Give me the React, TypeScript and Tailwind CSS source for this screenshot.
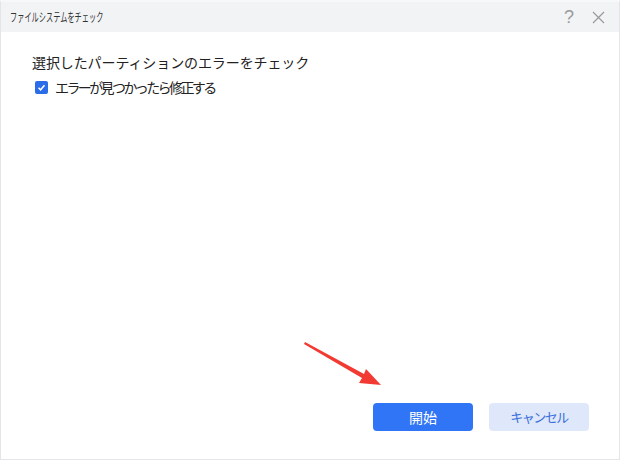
import React from "react";

export default function App() {
  return (
    <div
      className="w-[620px] h-[460px] bg-white overflow-hidden relative"
      style={{ fontFamily: '"Noto Sans CJK JP", "Noto Sans", sans-serif' }}
    >
      <div className="w-full h-full flex flex-col border border-[#e3e5e9] border-t-[2px] border-t-[#f7f8fa]">
        <div className="h-[30px] bg-[#f2f3f5] flex items-center pl-[9px] pr-[14px] shrink-0">
          <span className="text-[12px] text-[#333] inline-block origin-left scale-x-[0.6] whitespace-nowrap">ファイルシステムをチェック</span>
          <div className="ml-auto flex items-center gap-[18px] text-[#9a9a9a]">
            <span className="text-[18px] leading-none font-light" style={{ fontFamily: '"Liberation Sans", sans-serif' }}>?</span>
            <svg width="13" height="13" viewBox="0 0 13 13">
              <path d="M1 1 L12 12 M12 1 L1 12" stroke="#9a9a9a" strokeWidth="1.2" />
            </svg>
          </div>
        </div>
        <div className="flex-1 flex flex-col pl-[31px] pt-[19px]">
          <div className="text-[14px] text-[#222] leading-[22px] tracking-[-0.1px]">選択したパーティションのエラーをチェック</div>
          <label className="flex items-center mt-[4px] gap-[7px]">
            <span className="w-[13px] h-[13px] ml-[3px] rounded-[2px] bg-[#2b6de8] flex items-center justify-center">
              <svg width="9" height="9" viewBox="0 0 9 9">
                <path d="M1.5 4.8 L3.6 6.8 L7.5 2.2" stroke="white" strokeWidth="1.5" fill="none" />
              </svg>
            </span>
            <span className="text-[14px] text-[#222] leading-[20px] tracking-[-2.6px]">エラーが見つかったら修正する</span>
          </label>
          <div className="flex-1" />
          <div className="flex justify-end gap-[16px] pr-[30px] pb-[28px]">
            <button className="w-[100px] h-[28px] rounded-[4px] bg-[#2f75f5] text-white text-[14px]">開始</button>
            <button className="w-[100px] h-[28px] rounded-[4px] bg-[#dfe8fa] text-[#3b6fd9] text-[13px] tracking-[-1.5px]">キャンセル</button>
          </div>
        </div>
      </div>
      <svg className="absolute left-0 top-0 pointer-events-none" width="620" height="460">
        <path d="M305 342 L364 374 L366 369 L381 385 L359 383 L362 378 L304 344 Z" fill="#f23a32" />
      </svg>
    </div>
  );
}
